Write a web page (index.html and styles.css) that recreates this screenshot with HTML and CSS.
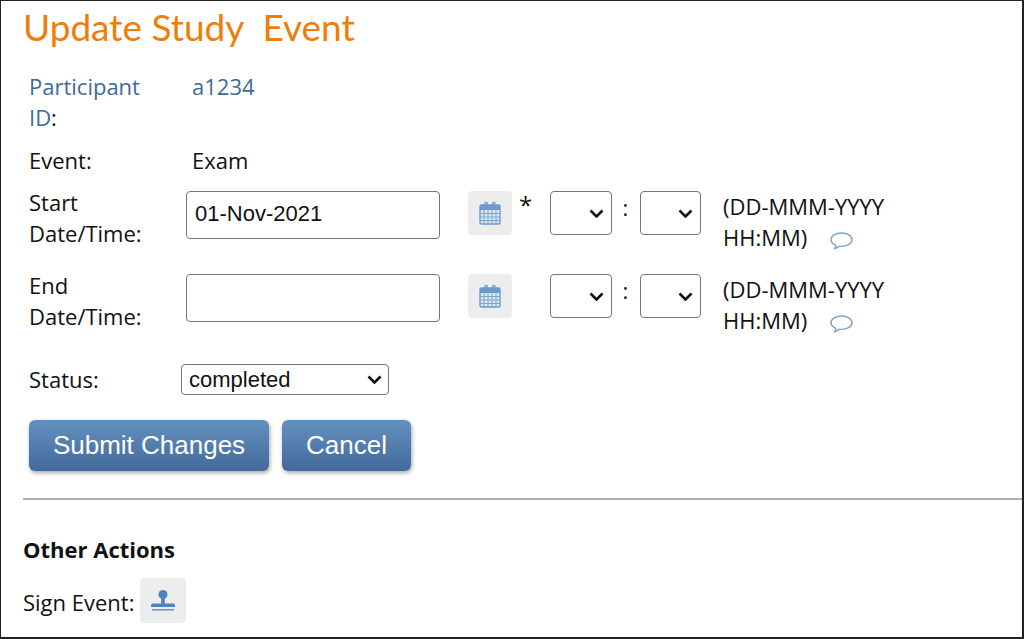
FILE: index.html
```html
<!DOCTYPE html>
<html lang="en">
<head>
    <meta charset="UTF-8">
    <title>Update Study Event</title>
    <link rel="stylesheet" href="styles.css">
</head>
<body>
    <h1 class="page-title">Update Study&nbsp; Event</h1>

    <form class="event-form">
        <div class="form-row participant-row">
            <div class="form-label"><span>Participant</span> <span>ID</span><span class="label-colon">:</span></div>
            <div class="form-value">a1234</div>
        </div>
        <div class="form-row event-row">
            <div class="form-label">Event:</div>
            <div class="form-value">Exam</div>
        </div>

        <div class="form-row date-row">
            <div class="form-label">Start Date/Time:</div>
            <input class="date-input" type="text" value="01-Nov-2021">
            <button class="icon-btn" type="button">
                <svg width="22" height="24" viewBox="0 0 22 24"><use href="#calendar"></use></svg>
            </button>
            <span class="required-mark">*</span>
            <select class="time-select"><option></option></select>
            <span class="time-colon">:</span>
            <select class="time-select"><option></option></select>
            <div class="date-hint">(DD-MMM-YYYY HH:MM)
                <svg class="hint-icon" width="23" height="18" viewBox="0 0 23 18"><use href="#bubble"></use></svg>
            </div>
        </div>

        <div class="form-row date-row">
            <div class="form-label">End Date/Time:</div>
            <input class="date-input" type="text">
            <button class="icon-btn" type="button">
                <svg width="22" height="24" viewBox="0 0 22 24"><use href="#calendar"></use></svg>
            </button>
            <span class="required-mark"></span>
            <select class="time-select"><option></option></select>
            <span class="time-colon">:</span>
            <select class="time-select"><option></option></select>
            <div class="date-hint">(DD-MMM-YYYY HH:MM)
                <svg class="hint-icon" width="23" height="18" viewBox="0 0 23 18"><use href="#bubble"></use></svg>
            </div>
        </div>

        <div class="form-row status-row">
            <div class="status-label">Status:</div>
            <select class="status-select">
                <option>completed</option>
            </select>
        </div>

        <div class="form-actions">
            <button class="action-btn submit-btn" type="button">Submit Changes</button>
            <button class="action-btn cancel-btn" type="button">Cancel</button>
        </div>
    </form>

    <hr class="divider">

    <h2 class="section-title">Other Actions</h2>
    <div class="sign-row">
        <span class="sign-label">Sign Event:</span>
        <button class="icon-btn sign-btn" type="button">
            <svg width="26" height="26" viewBox="0 0 26 26">
                <circle cx="13" cy="6.500" r="4.500" fill="#4f83bb"></circle>
                <rect x="11.200" y="9" width="3.600" height="7" fill="#4f83bb"></rect>
                <path d="M1 17.500a2 2 0 0 1 2-2h20a2 2 0 0 1 2 2v1.500H1z" fill="#4f83bb"></path>
                <rect x="2" y="21" width="22" height="1.600" fill="#6e9ac8"></rect>
            </svg>
        </button>
    </div>

    <!-- icons used more than once -->
    <svg class="icon-defs" width="0" height="0">
        <symbol id="calendar" viewBox="0 0 22 24">
            <rect x="1" y="4" width="20" height="19" rx="1.500" fill="#dbe7f3" stroke="#6b9acb" stroke-width="1.400"></rect>
            <rect x="1" y="4" width="20" height="5" fill="#6b9acb"></rect>
            <path d="M6 7V2.500a1.200 1.200 0 0 1 2.400 0V7M13.600 7V2.500a1.200 1.200 0 0 1 2.400 0V7" fill="none" stroke="#6b9acb" stroke-width="1.200"></path>
            <path d="M1 12.500h20M1 16h20M1 19.500h20M5 9v14M9 9v14M13 9v14M17 9v14" stroke="#7ba4cf" stroke-width="1"></path>
        </symbol>
        <symbol id="bubble" viewBox="0 0 23 18">
            <path d="M6 13.300C3 12.200 1 10.200 1 7.700 1 4 5.700 1 11.500 1S22 4 22 7.700s-4.700 6.700-10.500 6.700c-.8 0-1.600-.1-2.300-.2C8 15.500 6.500 16.400 4.300 16.900 5.300 15.800 5.800 14.700 6 13.300z" fill="none" stroke="#7ea3cb" stroke-width="1.400" stroke-linejoin="round"></path>
        </symbol>
    </svg>
</body>
</html>
```

FILE: styles.css
```css
* {
    margin: 0;
    padding: 0;
    box-sizing: border-box;
}

html, body {
    height: 100%;
}

body {
    height: 639px;
    border: 1px solid #222;
    border-width: 1px 2px 2px 1px;
    background: white;
    color: #111;
    font-family: "Open Sans", sans-serif;
    font-size: 22px;
    line-height: 31px;
    overflow: hidden;
}

.page-title {
    margin: 4px 0 0 22px;
    height: 44px;
    color: #f07d0a;
    font-family: "Lato", sans-serif;
    font-size: 37px;
    font-weight: 400;
    line-height: 44px;
}

.event-form {
    padding: 22px 0 0 28px;
}

.form-row {
    display: flex;
    align-items: flex-start;
}

.form-label {
    flex: none;
    width: 157px;
    padding-right: 30px;
}

.form-value {
    margin-left: 6px;
}

.participant-row {
    color: #3f6a98;
}

.label-colon {
    color: #111;
}

.event-row {
    margin-top: 12px;
}

.date-row {
    margin-top: 11px;
    height: 62px;
}

.date-row + .date-row {
    margin-top: 21px;
}

.date-input {
    flex: none;
    width: 254px;
    height: 48px;
    margin-top: 4px;
    padding: 0 8px 2px;
    border: 1px solid #767676;
    border-radius: 4px;
    color: #111;
    font-family: "Liberation Sans", sans-serif;
    font-size: 22px;
}

.icon-btn {
    flex: none;
    display: flex;
    align-items: center;
    justify-content: center;
    width: 44px;
    height: 44px;
    border: none;
    border-radius: 4px;
    background: #ededed;
}

.date-row .icon-btn {
    margin: 4px 0 0 28px;
}

.required-mark {
    flex: none;
    width: 38px;
    padding-left: 7px;
    font-size: 24px;
    line-height: 36px;
}

/* native arrow is too small, draw our own */
.time-select, .status-select {
    appearance: none;
    border: 1px solid #767676;
    border-radius: 4px;
    background: white url("data:image/svg+xml,%3Csvg xmlns='http://www.w3.org/2000/svg' width='15' height='9' viewBox='0 0 15 9'%3E%3Cpath d='M1.500 1.500l6 6 6-6' fill='none' stroke='%23111' stroke-width='2.600'/%3E%3C/svg%3E") no-repeat;
    color: #111;
}

.time-select {
    flex: none;
    width: 61.5px;
    height: 44px;
    margin-top: 4px;
    background-position: right 7px center;
    font-size: 18px;
}

.time-colon {
    flex: none;
    width: 28px;
    text-align: center;
    line-height: 40px;
}

.date-hint {
    width: 190px;
    margin: 4px 0 0 22px;
}

.hint-icon {
    margin-left: 17px;
    vertical-align: -4px;
}

.status-row {
    align-items: center;
    margin-top: 32px;
}

.status-label {
    flex: none;
    width: 152px;
}

.status-select {
    flex: none;
    width: 208px;
    height: 31px;
    padding-left: 7px;
    background-position: right 6px center;
    font-family: "Liberation Sans", sans-serif;
    font-size: 22px;
}

.form-actions {
    display: flex;
    gap: 13px;
    margin-top: 25px;
}

.action-btn {
    height: 51px;
    border: none;
    border-radius: 6px;
    background: linear-gradient(#6391bf, #42699a);
    box-shadow: 1px 2px 4px rgba(0,0,0,0.35);
    color: white;
    font-family: "Liberation Sans", sans-serif;
    font-size: 26px;
}

.submit-btn {
    width: 240px;
}

.cancel-btn {
    width: 129px;
}

.divider {
    height: 2px;
    margin: 27px 0 0 22px;
    border: none;
    background: #b0b0b0;
}

.section-title {
    margin: 34px 0 0 22px;
    font-size: 22px;
    font-weight: 700;
    line-height: 31px;
}

.sign-row {
    display: flex;
    align-items: center;
    gap: 6px;
    margin: 13px 0 0 22px;
}

.sign-label {
    padding-top: 4px;
}

.sign-btn {
    width: 46px;
    height: 45px;
}

.icon-defs {
    position: absolute;
}
```
